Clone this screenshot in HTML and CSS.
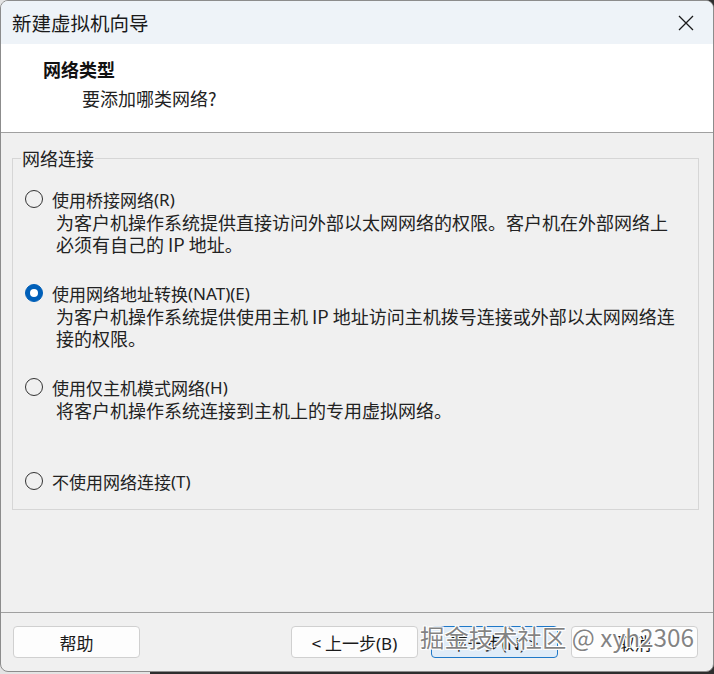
FILE: index.html
```html
<!DOCTYPE html>
<html lang="zh-CN">
<head>
  <meta charset="UTF-8">
  <title>新建虚拟机向导</title>
  <link rel="stylesheet" href="styles.css">
</head>
<body>

  <div class="window">
    <div class="titlebar">
      <span class="title">新建虚拟机向导</span>
      <svg class="close" width="16" height="16" viewBox="0 0 16 16">
        <path d="M1 1 L15 15 M15 1 L1 15" stroke="#1a1a1a" stroke-width="1.3" fill="none"/>
      </svg>
    </div>

    <div class="header">
      <h1>网络类型</h1>
      <p>要添加哪类网络?</p>
    </div>

    <div class="content">
      <fieldset>
        <legend>网络连接</legend>

        <div class="option">
          <div class="radio-row"><span class="radio"></span>使用桥接网络<span class="latin">(R)</span></div>
          <div class="desc">为客户机操作系统提供直接访问外部以太网网络的权限。客户机在外部网络上<br>必须有自己的 IP 地址。</div>
        </div>

        <div class="option">
          <div class="radio-row"><span class="radio checked"></span>使用网络地址转换<span class="latin">(NAT)(E)</span></div>
          <div class="desc">为客户机操作系统提供使用主机 IP 地址访问主机拨号连接或外部以太网网络连<br>接的权限。</div>
        </div>

        <div class="option">
          <div class="radio-row"><span class="radio"></span>使用仅主机模式网络<span class="latin">(H)</span></div>
          <div class="desc">将客户机操作系统连接到主机上的专用虚拟网络。</div>
        </div>

        <div class="option last">
          <div class="radio-row"><span class="radio"></span>不使用网络连接<span class="latin">(T)</span></div>
        </div>
      </fieldset>
    </div>

    <div class="footer">
      <button class="btn">帮助</button>
      <div class="nav-buttons">
        <button class="btn">&lt;&nbsp;上一步<span class="latin">(B)</span></button>
        <button class="btn primary">下一步<span class="latin">(N)</span>&nbsp;&gt;</button>
        <button class="btn">取消</button>
      </div>
      <div class="watermark">掘金技术社区 @ xyh2306</div>
    </div>
  </div>

</body>
</html>
```

FILE: styles.css
```css
body {
  margin: 0;
  padding: 0;
  background: linear-gradient(to right, #e4e4e4 150px, #2e2e2e 150px);
  font-family: "Noto Sans CJK SC", "Noto Sans", sans-serif;
  color: #1a1a1a;
}

.window {
  height: 672px;
  box-sizing: border-box;
  border: 1px solid #8c8c8c;
  border-radius: 8px;
  overflow: hidden;
  background: #f0f0f0;
  display: flex;
  flex-direction: column;
}

.titlebar {
  height: 43px;
  flex-shrink: 0;
  background: #eef3f8;
  display: flex;
  align-items: center;
  justify-content: space-between;
  padding: 0 19px 0 11px;
}

.title {
  font-size: 19.5px;
  line-height: 24px;
  color: #1a1a1a;
}

.header {
  height: 89px;
  flex-shrink: 0;
  background: #fff;
  border-bottom: 1px solid #a0a0a0;
  padding: 14px 0 0 42px;
  box-sizing: border-box;
}

.header h1 {
  margin: 0;
  font-size: 18px;
  line-height: 22px;
  font-weight: bold;
  color: #111;
}

.header p {
  margin: 7px 0 0 39px;
  font-size: 18px;
  line-height: 22px;
  color: #222;
}

.content {
  padding: 15px 14px 0 11px;
}

fieldset {
  margin: 0;
  padding: 19px 12px 16px 12px;
  border: 1px solid #d6d6d6;
}

legend {
  padding: 0 1px;
  margin-left: -4px;
  font-size: 18px;
  line-height: 20px;
  color: #222;
}

.option {
  height: 94px;
}

.option.last {
  height: 24px;
}

.radio-row {
  display: flex;
  align-items: center;
  height: 24px;
  font-size: 17px;
  color: #222;
}

.radio {
  width: 18px;
  height: 18px;
  box-sizing: border-box;
  border: 1px solid #333;
  border-radius: 50%;
  margin-right: 9px;
  flex-shrink: 0;
  position: relative;
}

.radio.checked {
  background: #005fb8;
  border-color: #005fb8;
}

.radio.checked::after {
  content: "";
  position: absolute;
  left: 4px;
  top: 4px;
  width: 8px;
  height: 8px;
  border-radius: 50%;
  background: #fff;
}

.latin {
  font-family: "Noto Sans", "Liberation Sans", sans-serif;
}

.desc {
  margin-left: 31px;
  font-size: 18px;
  line-height: 22px;
  color: #222;
  white-space: nowrap;
}

.footer {
  margin-top: auto;
  border-top: 1px solid #a0a0a0;
  height: 45px;
  padding: 13px 15px 0 12px;
  box-sizing: content-box;
  display: flex;
  justify-content: space-between;
  align-items: flex-start;
  position: relative;
}

.nav-buttons {
  display: flex;
  gap: 13px;
}

.btn {
  width: 127px;
  height: 32px;
  background: #fdfdfd;
  border: 1px solid #d0d0d0;
  border-radius: 4px;
  font-family: "Noto Sans CJK SC", "Noto Sans", sans-serif;
  font-size: 17px;
  color: #1a1a1a;
  padding: 0;
}

.btn.primary {
  background: #e0ecf8;
  border-color: #1f78c8;
}

.watermark {
  position: absolute;
  left: 419px;
  top: 7px;
  font-size: 24.4px;
  line-height: 34px;
  color: rgba(90, 90, 90, 0.75);
  text-shadow: 1px 1px 0 #fff, -1px -1px 0 #fff, 1px -1px 0 #fff, -1px 1px 0 #fff;
  white-space: nowrap;
  pointer-events: none;
}
```
